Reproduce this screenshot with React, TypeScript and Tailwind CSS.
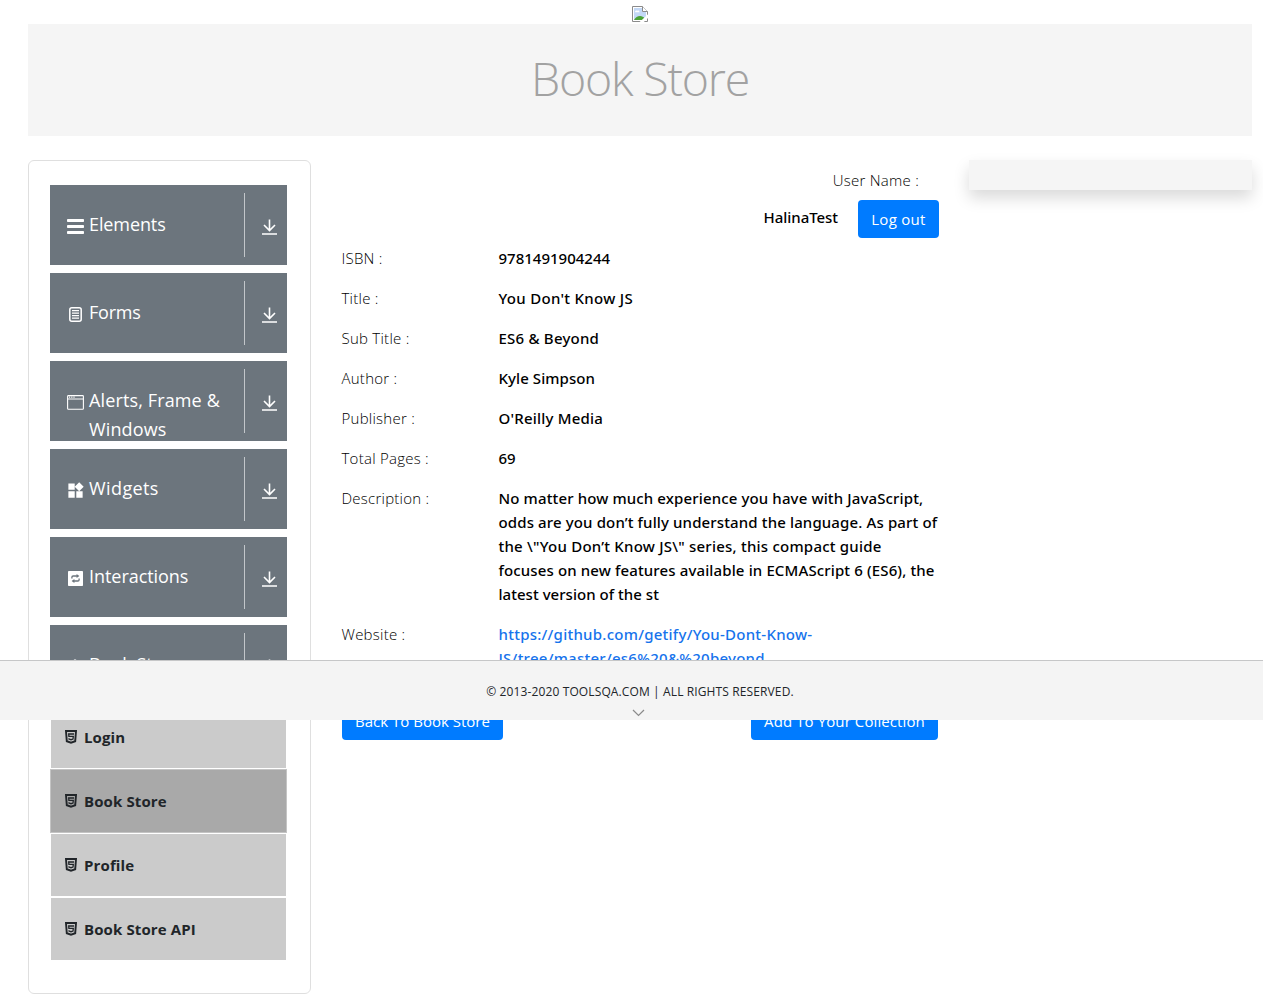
import type { ReactNode } from "react";
import { MdWidgets } from "react-icons/md";

const BarsIcon = () => (
  <svg width="17" height="15" viewBox="0 0 17 15" fill="currentColor">
    <rect x="0" y="0" width="17" height="3" rx="0.8" />
    <rect x="0" y="6" width="17" height="3" rx="0.8" />
    <rect x="0" y="12" width="17" height="3" rx="0.8" />
  </svg>
);

const FormIcon = () => (
  <svg width="13" height="15" viewBox="0 0 13 15" fill="none" stroke="currentColor">
    <rect x="0.8" y="0.8" width="11.4" height="13.4" rx="2" strokeWidth="1.5" />
    <path d="M3 3.6h7M3 6.1h7M3 8.6h7M3 11.1h7" strokeWidth="1.1" />
  </svg>
);

const WindowIcon = () => (
  <svg width="17" height="15" viewBox="0 0 17 15" fill="none" stroke="currentColor">
    <rect x="0.6" y="0.6" width="15.8" height="13.6" rx="0.8" strokeWidth="1.1" />
    <path d="M0.5 4h16" />
    <path d="M2 2.2h1.2M4.2 2.2h1.2M6.4 2.2h1.2" strokeWidth="1.2" />
  </svg>
);

const InteractIcon = () => (
  <svg width="15" height="15" viewBox="0 0 15 15">
    <rect width="15" height="15" rx="0.8" fill="currentColor" />
    <path d="M3.9 7.6V6.2q0-1.2 1.2-1.2H9M11.1 7.4v1.4q0 1.2-1.2 1.2H6" fill="none" stroke="#6c757d" strokeWidth="1.3" />
    <path d="M8.6 2.9l2.8 2.1-2.8 2.1zM6.4 7.9L3.6 10l2.8 2.1z" fill="#6c757d" />
  </svg>
);

const BookIcon = () => (
  <svg width="15" height="15" viewBox="0 0 15 15" fill="none" stroke="currentColor" strokeWidth="1.3">
    <path d="M1 4l6-3 6.5 3-6 3zM1 4v7l6.5 3V7M7.5 14l6-3V4" />
  </svg>
);

const DownIcon = () => (
  <svg width="15" height="16" viewBox="0 0 15 16" fill="none" stroke="currentColor" strokeWidth="1.6">
    <path d="M7.5 0.5v11M2 6l5.5 5.5L13 6M0 15h15" />
  </svg>
);

const HtmlIcon = () => (
  <svg width="12" height="14" viewBox="0 0 12 14" fill="none" stroke="currentColor">
    <path d="M1 1h10l-.8 10.2L6 12.7l-4.2-1.5z" strokeWidth="1.9" />
    <path d="M9 4H3.7l.2 2.4h4.4L8 9l-2 .7L4 9v-.8" strokeWidth="1.3" />
  </svg>
);

const BrokenImage = () => (
  <svg width="16" height="16" viewBox="0 0 16 16">
    <path d="M.5.5h10l5 5v10H.5z" fill="#fff" stroke="#8b8b8b" />
    <path d="M2 2h8v4h4v8H2z" fill="#c3d8f6" />
    <path d="M3 6.2c0-1.3 1.3-2 2.1-1.3.8-.9 2.5-.2 2.4 1.3z" fill="#fff" />
    <path d="M2 14c1.5-2.5 3.5-4 6-4 2 0 3.5 1 4.5 2v2z" fill="#4ba336" />
    <path d="M10.5.5v5h5" fill="#fff" stroke="#8b8b8b" />
    <path d="M16 8.3L7.6 16h4.2L16 12z" fill="#fff" />
  </svg>
);

const groups: { name: string; icon: ReactNode; tracking: string }[] = [
  { name: "Elements", icon: <BarsIcon />, tracking: "tracking-[-0.1px]" },
  { name: "Forms", icon: <FormIcon />, tracking: "tracking-[-0.2px]" },
  { name: "Alerts, Frame & Windows", icon: <WindowIcon />, tracking: "tracking-[0.13px]" },
  { name: "Widgets", icon: <MdWidgets size={19} className="-m-0.5 shrink-0" />, tracking: "tracking-[0.4px]" },
  { name: "Interactions", icon: <InteractIcon />, tracking: "tracking-[-0.05px]" },
  { name: "Book Store Application", icon: <BookIcon />, tracking: "tracking-[0px]" },
];

const pages = ["Login", "Book Store", "Profile", "Book Store API"];

const details: { label: string; value: string; tracking: string }[] = [
  { label: "ISBN :", value: "9781491904244", tracking: "tracking-[0px]" },
  { label: "Title :", value: "You Don't Know JS", tracking: "tracking-[0.3px]" },
  { label: "Sub Title :", value: "ES6 & Beyond", tracking: "tracking-[0.22px]" },
  { label: "Author :", value: "Kyle Simpson", tracking: "tracking-[0.08px]" },
  { label: "Publisher :", value: "O'Reilly Media", tracking: "tracking-[0.2px]" },
  { label: "Total Pages :", value: "69", tracking: "tracking-[0px]" },
];

const description: { line: string; tracking: string }[] = [
  { line: "No matter how much experience you have with JavaScript,", tracking: "tracking-[0.13px]" },
  { line: "odds are you don’t fully understand the language. As part of", tracking: "tracking-[0.13px]" },
  { line: 'the \\"You Don’t Know JS\\" series, this compact guide', tracking: "tracking-[0.22px]" },
  { line: "focuses on new features available in ECMAScript 6 (ES6), the", tracking: "tracking-[0.13px]" },
  { line: "latest version of the st", tracking: "tracking-[0.03px]" },
];

function Row({ label, children }: { label: string; children: ReactNode }) {
  return (
    <div className="flex pb-4 leading-6">
      <div className="-ml-[0.5px] w-[157px] shrink-0 text-[15px] font-light tracking-[0.25px] text-black">{label}</div>
      <div className="whitespace-nowrap font-['Noto_Sans',sans-serif] text-[15px] font-medium text-black">{children}</div>
    </div>
  );
}

export default function App() {
  return (
    <div className="relative h-[994px] w-[1263px] overflow-hidden bg-white font-['Open_Sans','Noto_Sans',sans-serif] text-[#212529]">
      <header className="flex h-6 w-[1280px] justify-center pt-1.5">
        <BrokenImage />
      </header>
      <div className="ml-7 w-[1224px]">
        <h1 className="flex h-28 items-center justify-center bg-[#f5f5f5] pb-[3px] text-[46.5px] font-light leading-none tracking-[-1.2px] text-[#a2a2a2]">
          Book Store
        </h1>
        <div className="mt-6 flex items-start">
          <nav className="h-[834px] w-[283px] shrink-0 rounded-md border border-[#dfdfdf] px-[21px] pt-6">
            <div className="flex flex-col gap-2">
              {groups.map((g) => (
                <div key={g.name} className="flex h-20 w-[237px] overflow-hidden bg-[#6c757d] text-white">
                  <div className="flex w-[194px] shrink-0 pl-[17px] pt-[25px]">
                    <span className="mt-[9px] flex h-[15px] w-[17px] shrink-0 items-center justify-center">{g.icon}</span>
                    <span className={`ml-[5px] w-[150px] text-[18px] leading-[29px] ${g.tracking}`}>{g.name}</span>
                  </div>
                  <div className="mt-2 h-16 w-px bg-[#c2c6ca]" />
                  <div className="ml-[17px] mt-[34px]">
                    <DownIcon />
                  </div>
                </div>
              ))}
            </div>
            <ul className="mx-px flex w-[235px] flex-col">
              {pages.map((p) => (
                <li
                  key={p}
                  className={
                    p === "Book Store"
                      ? "my-px flex h-[62px] items-center bg-[#a9a9a9] pl-3.5 outline outline-1 outline-[#c4c4c4]"
                      : "my-px flex h-[62px] items-center bg-[#cbcbcb] pl-3.5"
                  }
                >
                  <HtmlIcon />
                  <span className="ml-[7px] text-[15px] font-bold leading-6 tracking-[0.12px]">{p}</span>
                </li>
              ))}
            </ul>
          </nav>
          <main className="ml-[31px] w-[597px] shrink-0">
            <div className="flex flex-col items-end pt-2">
              <div className="pr-5 text-[15px] font-light leading-6 tracking-[0.25px] text-black">User Name :</div>
              <div className="mt-2 flex items-start">
                <span className="pt-[5px] font-['Noto_Sans',sans-serif] text-[15px] font-medium leading-6 tracking-[-0.05px] text-black">HalinaTest</span>
                <button className="ml-5 h-[38px] w-[81px] rounded bg-[#007bff] text-[15px] leading-6 tracking-[0.3px] text-white">Log out</button>
              </div>
            </div>
            <div className="pt-2">
              {details.map((d) => (
                <Row key={d.label} label={d.label}>
                  <span className={d.tracking}>{d.value}</span>
                </Row>
              ))}
              <Row label="Description :">
                {description.map((d) => (
                  <div key={d.line} className={d.tracking}>{d.line}</div>
                ))}
              </Row>
              <Row label="Website :">
                <a className="tracking-[0.25px] text-[#1673ec]">
                  https://github.com/getify/You-Dont-Know-
                  <br />
                  JS/tree/master/es6%20&%20beyond
                </a>
              </Row>
            </div>
            <div className="mt-4 flex justify-between pr-px">
              <button className="h-[38px] w-[161px] rounded bg-[#007bff] text-[15px] text-white">Back To Book Store</button>
              <button className="h-[38px] w-[187px] rounded bg-[#007bff] text-[15px] tracking-[0.1px] text-white">Add To Your Collection</button>
            </div>
          </main>
          <aside className="ml-[30px] h-[30px] flex-1 bg-[#f5f5f5] shadow-[0_8px_16px_rgba(0,0,0,0.15)]" />
        </div>
      </div>
      <footer className="absolute left-0 top-[660px] flex h-[60px] w-[1280px] flex-col items-center border-t border-[#c6c7c8] bg-[#f4f4f4]">
        <span className="mt-[21px] whitespace-nowrap text-[12px] leading-5 tracking-[0.12px]">© 2013-2020 TOOLSQA.COM | ALL RIGHTS RESERVED.</span>
        <svg className="-ml-1 mt-[7px]" width="13" height="8" viewBox="0 0 13 8" fill="none" stroke="#8a8a8a" strokeWidth="1.2">
          <path d="M1 1l5.5 5.5L12 1" />
        </svg>
      </footer>
    </div>
  );
}
